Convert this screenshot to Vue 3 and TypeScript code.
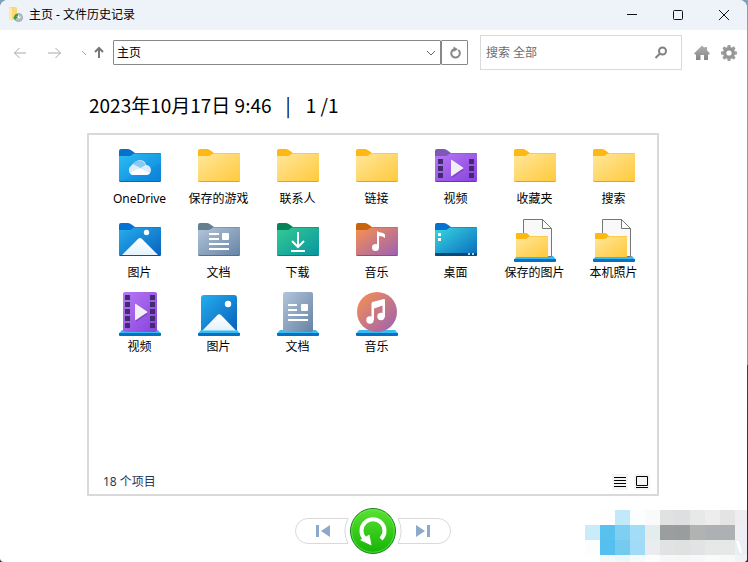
<script setup lang="ts">
import { ref } from 'vue'

interface Entry {
  name: string
  icon: string
}

const address = ref('主页')
const query = ref('')
const stamp = '2023年10月17日 9:46'
const entries: Entry[] = [
  { name: 'OneDrive', icon: 'onedrive' },
  { name: '保存的游戏', icon: 'folder' },
  { name: '联系人', icon: 'folder' },
  { name: '链接', icon: 'folder' },
  { name: '视频', icon: 'video' },
  { name: '收藏夹', icon: 'folder' },
  { name: '搜索', icon: 'folder' },
  { name: '图片', icon: 'picture' },
  { name: '文档', icon: 'document' },
  { name: '下载', icon: 'download' },
  { name: '音乐', icon: 'music' },
  { name: '桌面', icon: 'desktop' },
  { name: '保存的图片', icon: 'lib-folder' },
  { name: '本机照片', icon: 'lib-folder' },
  { name: '视频', icon: 'lib-video' },
  { name: '图片', icon: 'lib-picture' },
  { name: '文档', icon: 'lib-document' },
  { name: '音乐', icon: 'lib-music' },
]

// tab colour, front gradient start and end, front bottom edge
const tones: Record<string, [string, string, string, string]> = {
  folder: ['#fdb813', '#ffe79c', '#ffc93a', '#e2a316'],
  onedrive: ['#0571ce', '#2bbdf2', '#0b83dc', '#0864b4'],
  video: ['#7f57b8', '#b678f5', '#8842dd', '#6b30b8'],
  picture: ['#0672d0', '#25aeee', '#0960bb', '#07509f'],
  document: ['#64808e', '#b3c5da', '#6583a5', '#536f90'],
  download: ['#07825c', '#33cb91', '#0994a2', '#087b83'],
  music: ['#c8640e', '#f9914f', '#9a60b6', '#92506f'],
  desktop: ['#0672cf', '#39d7e1', '#0869bd', '#073f6c'],
}
const toneNames = Object.keys(tones)

const mosaic: string[] = [
  '#fff', '#fefefe', '#c2e9f9', '#fbfefe', '#fafafa', '#e0e2e2', '#dddfe1', '#e7e9e9', '#ededee', '#e4e4e5', '#eeeef1',
  '#caebf8', '#59c1ee', '#80cff1', '#a3dcf6', '#e3eded', '#9a9e9e', '#999d9d', '#b1b3b3', '#aeb1b3', '#aeb1b3', '#eeeff4',
  '#fcfefe', '#55bff0', '#75caef', '#a2dbf6', '#e9edf0', '#e1e2e4', '#dfe1e1', '#e2e3e4', '#e6e7e7', '#e6e7e7', '#eaeff4',
  '#fefefe', '#f2f9fb', '#e9f6fb', '#f3fbfc', '#fdfdfd', '#f7f7f7', '#f6f6f6', '#f8f8f8', '#fafafa', '#f8f8f8', '#eff2f7',
]
</script>

<template>
  <div class="window">
    <svg class="defs" aria-hidden="true">
      <defs>
        <linearGradient v-for="t in toneNames" :id="'g-' + t" :key="t" x1="0" y1="0" x2="1" y2="1">
          <stop offset="0" :stop-color="tones[t][1]" />
          <stop offset="1" :stop-color="tones[t][2]" />
        </linearGradient>
        <linearGradient id="g-snow" x1="0" y1="0" x2="0" y2="1">
          <stop offset="0" stop-color="#fff" />
          <stop offset="1" stop-color="#e4f3fd" />
        </linearGradient>
        <linearGradient id="g-gray" x1="0" y1="0" x2="0" y2="1">
          <stop offset="0" stop-color="#b0b0b0" />
          <stop offset="1" stop-color="#858585" />
        </linearGradient>
        <linearGradient id="g-green" x1="0" y1="0" x2="0" y2="1">
          <stop offset="0" stop-color="#5ae232" />
          <stop offset="1" stop-color="#16b405" />
        </linearGradient>
      </defs>
    </svg>

    <header class="titlebar">
      <svg class="app-icon" width="16" height="16" viewBox="0 0 16 16" aria-hidden="true">
        <path d="M1 0h7l1 1v12H3l-2-1z" fill="#fbd977" />
        <path d="M1 0l3 1.500V14l-3-1.500z" fill="#ffe9a6" />
        <circle cx="10.500" cy="10.500" r="4" fill="#b9c2c8" stroke="#9ba5ac" />
        <path d="M10.500 8.500v2.500l2-1" fill="none" stroke="#fff" />
        <path d="M10 8C8 8 7 9 7 11" fill="none" stroke="#31a33c" stroke-width="2" />
        <path d="M5 10h4.500L7 13z" fill="#31a33c" />
      </svg>
      <h1>主页 - 文件历史记录</h1>
      <div class="caption">
        <button type="button" aria-label="最小化"><svg width="12" height="12"><path d="M1 5.500h10" /></svg></button>
        <button type="button" aria-label="最大化"><svg width="12" height="12"><rect x="1.500" y="1.500" width="9" height="9" rx="1" /></svg></button>
        <button type="button" aria-label="关闭"><svg width="12" height="12"><path d="M1 1l10 10M11 1L1 11" /></svg></button>
      </div>
    </header>

    <div class="toolbar">
      <div class="history">
        <button type="button" aria-label="后退"><svg width="20" height="20"><path d="M16 10H4.500M9.500 5l-5 5 5 5" /></svg></button>
        <button type="button" aria-label="前进"><svg width="20" height="20"><path d="M4 10h12.500M11.500 5l5 5-5 5" /></svg></button>
        <button type="button" aria-label="最近的位置"><svg width="12" height="20"><path d="M7 8l4 4" /></svg></button>
        <button class="up" type="button" aria-label="向上"><svg width="14" height="20"><path d="M7 15V5M3 9l4-4 4 4" /></svg></button>
      </div>
      <div class="address">
        <input v-model="address" type="text" aria-label="地址" />
        <button type="button" aria-label="展开"><svg width="12" height="12"><path d="M2 4l4 4 4-4" /></svg></button>
      </div>
      <button class="refresh" type="button" aria-label="刷新">
        <svg width="14" height="14"><path d="M10.300 4A4.300 4.300 0 1 1 6 3.300" /><path d="M5.500 .5L10 3.300 5.500 6z" class="hook" /></svg>
      </button>
      <div class="search">
        <input v-model="query" type="search" placeholder="搜索 全部" aria-label="搜索" />
        <button type="button" aria-label="开始搜索"><svg width="14" height="14"><circle cx="8.500" cy="5" r="3.500" /><path d="M6 7.500L1.500 12" /></svg></button>
      </div>
      <button class="tool" type="button" aria-label="主页">
        <svg width="18" height="18"><path d="M9 1.500l2.500 2.500V3H14v3.300L17 9.500l-1 1h-1V16h-4v-5H7.500v5H3v-5.500H2l-1-1z" fill="url(#g-gray)" /></svg>
      </button>
      <button class="tool" type="button" aria-label="设置">
        <svg width="18" height="18" viewBox="0 0 18 18">
          <g fill="#a0a0a0"><rect v-for="n in 4" :key="n" x="7.300" y="1" width="3.400" height="16" rx="1" :transform="`rotate(${n * 45} 9 9)`" /></g>
          <circle cx="9" cy="9" r="4.300" fill="none" stroke="#969696" stroke-width="3.400" />
          <circle cx="9" cy="9" r="2.600" fill="#fff" />
        </svg>
      </button>
    </div>

    <main>
      <h2>{{ stamp }}<span class="bar">|</span>1 /1</h2>

      <section class="panel">
        <ul class="items">
          <li v-for="(e, i) in entries" :key="i">
            <svg width="48" height="48" viewBox="0 0 48 48" aria-hidden="true">
              <g v-if="tones[e.icon]">
                <path d="M3 9q0-2 2-2h7q2 0 3.500 1.500L19 11h25q1 0 1 1v7H3z" :fill="tones[e.icon][0]" />
                <path d="M3 14h10q2 0 3.500-1.500Q17.500 11.500 19 11.500h26V38.500q0 1.500-1.500 1.500h-39Q3 40 3 38.500z" :fill="`url(#g-${e.icon})`" />
                <path d="M3.500 39q.5.500 1.500.500h38q1 0 1.500-.5" fill="none" :stroke="tones[e.icon][3]" />
              </g>
              <g v-else>
                <path d="M6 40h36l3 3.500H3z" fill="#35bdf3" />
                <path d="M3 43h42v2q0 1-1 1H4q-1 0-1-1z" fill="#0670c4" />
              </g>

              <g v-if="e.icon === 'onedrive'">
                <path d="M3 40L45 21v19z" fill="#0877ce" opacity=".2" />
                <path d="M15 24a5 5 0 0 1 4-3 6 6 0 0 1 11 2 5 5 0 0 1 0 10H17a5 5 0 0 1-2-9z" fill="#dcecfa" />
                <path d="M17 22a7 7 0 0 1 12.500 1l-5 3z" fill="#8ac9ef" />
                <path d="M14 31q2-2 10-4.500L34 31q-1 2-4 2H17q-2 0-3-2z" fill="#fff" />
              </g>
              <g v-else-if="e.icon === 'video'">
                <g fill="#432c6d">
                  <rect v-for="n in 3" :key="n" x="6" :y="10 + n * 7" width="5" height="5" />
                  <rect v-for="n in 3" :key="n + 3" x="37" :y="10 + n * 7" width="5" height="5" />
                </g>
                <path d="M20 20l12 8-12 8z" fill="#5a2799" opacity=".4" />
                <path d="M19 18.500q0-1 1-.5l11 7.500q.5.500 0 1L20 34q-1 .5-1-.5z" fill="#f1eef4" />
              </g>
              <g v-else-if="e.icon === 'picture'">
                <path d="M6 39L22 23q2-2 4 0l16 16z" fill="url(#g-snow)" />
                <circle cx="30.500" cy="16.500" r="2.700" fill="#fff" />
              </g>
              <g v-else-if="e.icon === 'document'" fill="#fff">
                <path d="M14 17h10v2H14zM14 22h10v2H14zM14 27h20v2H14zM14 32h20v2H14z" />
                <rect x="27" y="17" width="7" height="7" rx="1" />
              </g>
              <g v-else-if="e.icon === 'download'" fill="none" stroke="#fff" stroke-width="2">
                <path d="M24 16v14M18 25l6 6 6-6M17 35h14" />
              </g>
              <g v-else-if="e.icon === 'music'" fill="#fff">
                <circle cx="22.500" cy="31.500" r="3.500" />
                <path d="M24 15q1 1 4 1.500t4 2V22q-2-2-6-2v12h-2z" />
              </g>
              <g v-else-if="e.icon === 'desktop'">
                <path d="M3 37h42v1.500q0 1.500-1.500 1.500h-39Q3 40 3 38.500z" fill="#074a78" />
                <path d="M6 17h3v3H6zM6 22h3v3H6z" fill="#fff" />
                <path d="M36 37h2v2h-2zM40 37h2v2h-2z" fill="#b6d4e9" />
              </g>
              <g v-else-if="e.icon === 'lib-folder'">
                <path d="M12.500 3.500h19l9 9V40.500h-28z" fill="#f9f9f9" stroke="#777" />
                <path d="M31.500 3.500v9h9z" fill="#fff" stroke="#777" />
                <path d="M5 18q0-1 1-1h9q1 0 2 1l2 2h18v4H5z" fill="#fdb813" />
                <path d="M5 23h9q2 0 3-1.500 1-1 2-1h18V41H5z" fill="url(#g-folder)" />
              </g>
              <g v-else-if="e.icon === 'lib-video'">
                <rect x="7" y="2" width="34" height="40" rx="2" fill="url(#g-video)" />
                <g fill="#432c6d">
                  <rect v-for="n in 5" :key="n" x="9" :y="-2 + n * 7" width="5" height="5" />
                  <rect v-for="n in 5" :key="n + 5" x="34" :y="-2 + n * 7" width="5" height="5" />
                </g>
                <path d="M20 16l12 8-12 8z" fill="#5a2799" opacity=".4" />
                <path d="M19 14.500q0-1 1-.5l11 7.500q.5.500 0 1L20 30q-1 .5-1-.5z" fill="#f1eef4" />
              </g>
              <g v-else-if="e.icon === 'lib-picture'">
                <path d="M6 8q0-3 3-3h30q3 0 3 3v32H6z" fill="url(#g-picture)" />
                <path d="M7.500 40.500L22 25.500q2-2.500 4.500 0L41 40.500z" fill="url(#g-snow)" />
                <circle cx="33" cy="14" r="3.200" fill="#fff" />
              </g>
              <g v-else-if="e.icon === 'lib-document'">
                <rect x="9" y="2" width="30" height="40" rx="2" fill="url(#g-document)" />
                <g fill="#fff">
                  <path d="M14 14h9v2h-9zM14 19h9v2h-9zM14 24h20v2H14zM14 29h20v2H14z" />
                  <rect x="27" y="14" width="7" height="7" rx="1" />
                </g>
              </g>
              <g v-else-if="e.icon === 'lib-music'">
                <circle cx="24" cy="22" r="20" fill="url(#g-music)" />
                <g fill="#fff">
                  <circle cx="17" cy="30" r="3.700" />
                  <circle cx="28" cy="26.500" r="3.700" />
                  <path d="M18.500 13.500q0-1 1-1.500L31 9q1 0 1 1v17h-2.500V15.500l-8.500 3V30h-2.500z" />
                </g>
              </g>
            </svg>
            <span>{{ e.name }}</span>
          </li>
        </ul>
        <footer class="status">
          <span class="count">{{ entries.length }} 个项目</span>
          <button type="button" aria-label="详细信息"><svg width="16" height="16"><path d="M2 3.500h12M2 6.500h12M2 9.500h12M2 12.500h12" /></svg></button>
          <button type="button" aria-label="大图标"><svg width="16" height="16"><path d="M2.500 2.500h11v9h-11zM2 13.500h12" /></svg></button>
        </footer>
      </section>
    </main>

    <nav class="player">
      <button type="button" aria-label="上一版本">
        <svg width="54" height="26">
          <path class="pill" d="M53 .5H13A12.500 12.500 0 0 0 13 25.500H53A28 28 0 0 1 53 .5z" />
          <path d="M21 7h3v12h-3zM35 7v12l-9-6z" fill="#8ca8cb" />
        </svg>
      </button>
      <button type="button" aria-label="还原">
        <svg width="46" height="46">
          <circle cx="23" cy="23" r="22.500" fill="url(#g-green)" stroke="#16831a" />
          <circle cx="23" cy="23" r="21.300" fill="none" stroke="#7cec60" opacity=".6" />
          <path d="M31 31A11.500 11.500 0 1 0 15 31" fill="none" stroke="#fff" stroke-width="4" />
          <path d="M10 32l9.500-5.500 2 11z" fill="#fff" />
        </svg>
      </button>
      <button type="button" aria-label="下一版本">
        <svg width="54" height="26">
          <path class="pill" d="M1 .5h40a12.500 12.500 0 0 1 0 25H1A28 28 0 0 0 1 .5z" />
          <path d="M19 7l9 6-9 6zM30 7h3v12h-3z" fill="#8ca8cb" />
        </svg>
      </button>
    </nav>

    <div class="mosaic" aria-hidden="true">
      <i v-for="(c, i) in mosaic" :key="i" :style="{ background: c }"></i>
      <svg width="8" height="14"><path d="M0 1h3l3 12H4z" fill="#fff" /></svg>
    </div>
  </div>
</template>

<style>
body {
  background: linear-gradient(#7fa0be 0, #8996a0 65%, #2c3d78 65%, #24305c 90%);
}
</style>

<style scoped>
.window {
  position: relative;
  display: flex;
  flex-direction: column;
  box-sizing: border-box;
  min-height: 100vh;
  margin-right: 1px;
  overflow: hidden;
  border-radius: 8px 8px 4px 4px;
  background: #fff;
  color: #000;
  font: 12px/18px "Noto Sans", "Noto Sans CJK SC", sans-serif;
}
.defs {
  position: absolute;
  width: 0;
  height: 0;
}
svg {
  display: block;
  fill: none;
}
button {
  display: flex;
  align-items: center;
  justify-content: center;
  flex: none;
  padding: 0;
  border: 0;
  background: none;
}
input {
  flex: 1;
  min-width: 0;
  padding: 0;
  border: 0;
  outline: 0;
  background: none;
  color: #000;
  font: inherit;
}
input::placeholder {
  color: #6d6d6d;
  opacity: 1;
}
.titlebar {
  display: flex;
  align-items: center;
  height: 30px;
  padding-left: 8px;
  background: #eef3f9;
}
.titlebar h1 {
  flex: 1;
  margin: 0 0 0 5px;
  font-size: 12px;
  font-weight: 400;
}
.caption {
  display: flex;
  align-self: stretch;
}
.caption button {
  width: 46px;
  stroke: #111;
}
.toolbar {
  display: flex;
  align-items: center;
  height: 35px;
  padding: 5px 9px 0 10px;
}
.history {
  display: flex;
  flex: none;
  width: 96px;
  justify-content: space-between;
  margin-right: 7px;
  stroke: #a9a9a9;
}
.up {
  stroke: #777;
  stroke-width: 2;
}
.history button:nth-child(2) {
  margin-left: 9px;
}
.history button:nth-child(3) {
  margin-left: 7px;
}
.address {
  display: flex;
  flex: 1;
  min-width: 0;
  box-sizing: border-box;
  height: 25px;
  padding: 0 3px;
  border: 1px solid #888;
  border-radius: 1px;
}
.address button {
  stroke: #666;
}
.refresh {
  width: 27px;
  height: 25px;
  border: 1px solid #888;
  border-radius: 1px;
  stroke: #888;
  stroke-width: 2;
}
.hook {
  fill: #888;
  stroke: none;
}
.search {
  display: flex;
  box-sizing: border-box;
  width: 202px;
  height: 35px;
  margin: 0 11px 0 12px;
  padding: 0 13px 0 5px;
  border: 1px solid #d9d9d9;
}
.search button {
  stroke: #808080;
  stroke-width: 2;
}
.tool + .tool {
  margin-left: 9px;
}
main {
  display: flex;
  flex: 1;
  flex-direction: column;
  padding: 21px 88px 12px 87px;
}
h2 {
  margin: 0 0 14px 2px;
  font-family: "Noto Sans CJK SC", sans-serif;
  font-size: 19px;
  font-weight: 400;
  line-height: 28px;
}
.bar {
  margin: 0 15px 0 14px;
}
.panel {
  display: flex;
  flex: 1;
  flex-direction: column;
  border: 2px solid #d9d9d9;
}
.items {
  display: grid;
  flex: 1;
  grid-template-columns: repeat(auto-fill, 79px);
  align-content: start;
  row-gap: 8px;
  margin: 0;
  padding: 7px 3px 8px 11px;
  list-style: none;
}
.items li {
  display: flex;
  flex-direction: column;
  align-items: center;
  white-space: nowrap;
}
.status {
  display: flex;
  align-items: center;
  gap: 6px;
  padding: 0 7px 3px 14px;
}
.count {
  flex: 1;
  color: #1e395b;
}
.status button {
  background: #f4f4f4;
  stroke: #000;
}
.player {
  display: flex;
  align-items: center;
  justify-content: center;
  gap: 1px;
  padding: 0 2px 8px 0;
}
.pill {
  fill: #fff;
  stroke: #d9d9d9;
}
.mosaic {
  position: absolute;
  right: 0;
  bottom: 0;
  display: grid;
  grid-template-columns: repeat(10, 15px) 12px;
  grid-template-rows: repeat(3, 15px) 7px;
}
.mosaic svg {
  position: absolute;
  right: 3px;
  bottom: 8px;
}
</style>
